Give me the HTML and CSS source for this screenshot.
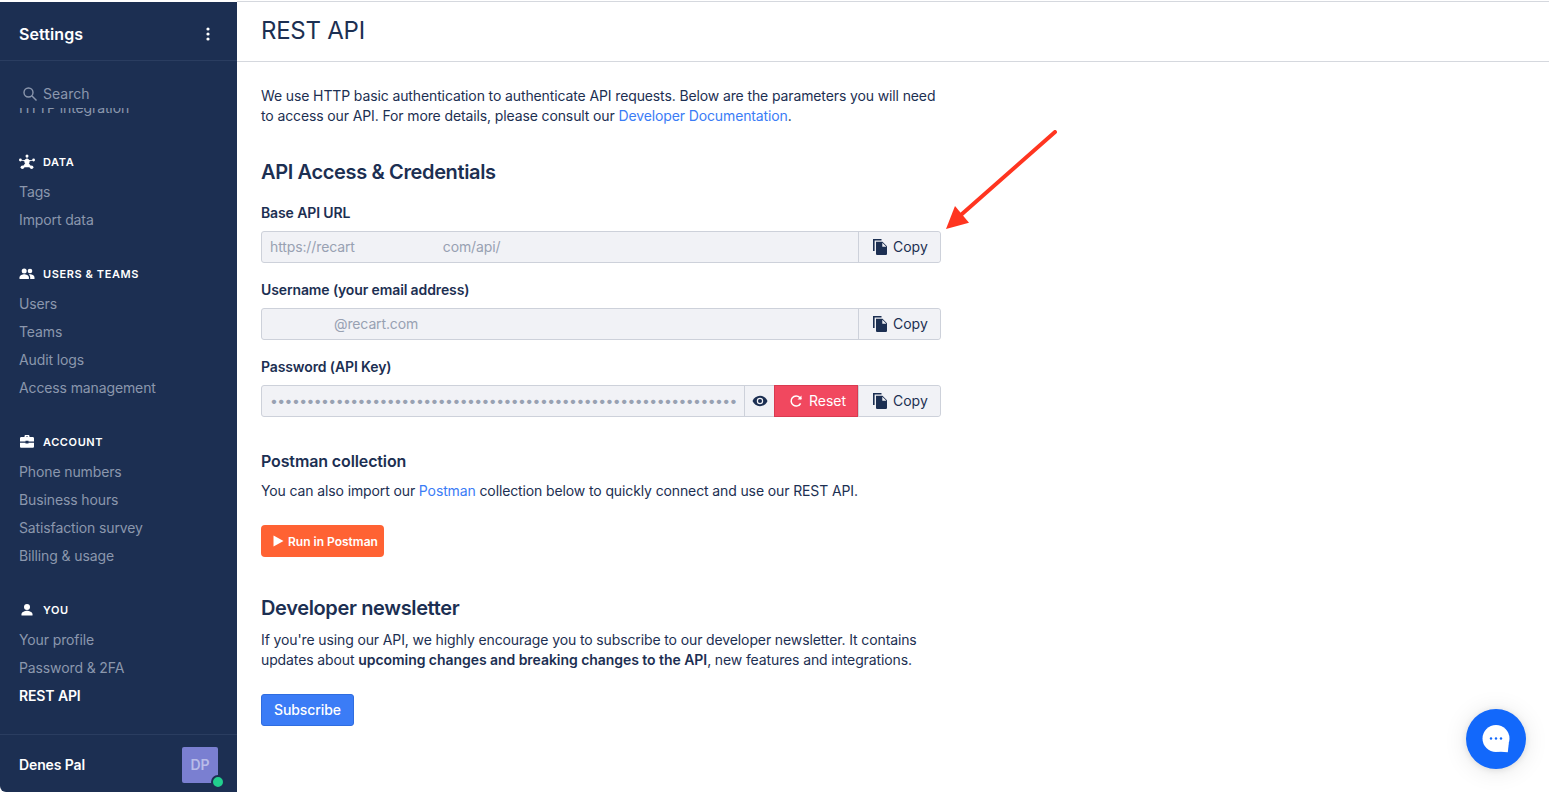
FILE: index.html
```html
<!DOCTYPE html>
<html lang="en">
  <head>
    <meta charset="UTF-8" />
    <title>REST API</title>
    <link rel="stylesheet" href="styles.css">
  </head>
  <body>
    <aside class="sidebar">
      <div class="sidebarHead">
        <span class="sidebarTitle">Settings</span>
        <svg class="dots" width="4" height="14" viewBox="0 0 4 14"><circle cx="2" cy="2" r="1.6"/><circle cx="2" cy="7" r="1.6"/><circle cx="2" cy="12" r="1.6"/></svg>
      </div>
      <div class="search">
        <svg width="16" height="16" viewBox="0 0 16 16" fill="none" stroke="#8b97ad" stroke-width="1.4"><circle cx="6.5" cy="6.5" r="4.5"/><path d="M10 10l4.5 4.5"/></svg>
        <span>Search</span>
      </div>
      <nav class="nav">
        <div class="navInner">
          <a class="navLink">HTTP integration</a>

          <div class="navGroup">
            <svg viewBox="0 0 16 16" fill="#fff"><circle cx="8" cy="7.400" r="2.600"/><circle cx="8" cy="1.900" r="1.500"/><circle cx="1.400" cy="6" r="1.400"/><circle cx="14.600" cy="6" r="1.400"/><circle cx="3.400" cy="13.200" r="1.800"/><circle cx="12.600" cy="13.200" r="1.800"/><path d="M8 2v5M1.400 6L8 7.400 14.600 6M3.400 13.200L8 7.400l4.600 5.800" stroke="#fff" stroke-width="0.600"/></svg>
            DATA
          </div>
          <a class="navLink">Tags</a>
          <a class="navLink">Import data</a>

          <div class="navGroup">
            <svg viewBox="0 0 16 16" fill="#fff"><circle cx="5.200" cy="5" r="2.500"/><circle cx="11" cy="5" r="2.300"/><path d="M0.500 13v-1.500c0-2 3-3.200 4.700-3.200s4.700 1.200 4.700 3.200V13z"/><path d="M11 8.300c1.800 0 4.500 1.100 4.500 3.200V13h-4.300v-1.800c0-1.100-.5-2-1.400-2.700.4-.1.800-.2 1.200-.2z"/></svg>
            USERS &amp; TEAMS
          </div>
          <a class="navLink">Users</a>
          <a class="navLink">Teams</a>
          <a class="navLink">Audit logs</a>
          <a class="navLink">Access management</a>

          <div class="navGroup">
            <svg viewBox="0 0 16 16" fill="#fff"><path d="M5.500 3V2.200C5.500 1.500 6 1 6.700 1h2.600c.7 0 1.200.5 1.200 1.200V3h3.200c.7 0 1.300.6 1.300 1.300V7.500H9.500V6.800h-3v.7H1V4.300C1 3.600 1.600 3 2.300 3zM7 3h2V2.400H7z"/><path d="M1 8.700h5.500v.9h3v-.9H15v3.800c0 .7-.6 1.300-1.300 1.300H2.300c-.7 0-1.300-.6-1.300-1.300z"/></svg>
            ACCOUNT
          </div>
          <a class="navLink">Phone numbers</a>
          <a class="navLink">Business hours</a>
          <a class="navLink">Satisfaction survey</a>
          <a class="navLink">Billing &amp; usage</a>

          <div class="navGroup">
            <svg viewBox="0 0 16 16" fill="#fff"><circle cx="8" cy="5" r="3"/><path d="M2.500 13.500v-1.300c0-2.200 3.600-3.400 5.500-3.400s5.500 1.200 5.500 3.400v1.300z"/></svg>
            YOU
          </div>
          <a class="navLink">Your profile</a>
          <a class="navLink">Password &amp; 2FA</a>
          <a class="navLink active">REST API</a>
        </div>
      </nav>
      <div class="sidebarFoot">
        <span class="userName">Denes Pal</span>
        <div class="avatar">DP<span class="status"></span></div>
      </div>
    </aside>

    <main class="main">
      <header class="pageHead"><h1>REST API</h1></header>
      <section class="content">
        <p class="text">We use HTTP basic authentication to authenticate API requests. Below are the parameters you will need to access our API. For more details, please consult our <a>Developer Documentation</a>.</p>

        <h2>API Access &amp; Credentials</h2>

        <label>Base API URL</label>
        <div class="field">
          <div class="fieldValue">https://recart<span class="maskUrl"></span>com/api/</div>
          <button class="copyBtn">
            <svg viewBox="0 0 16 16"><use href="#copyIcon"/></svg>
            Copy
          </button>
        </div>

        <label>Username (your email address)</label>
        <div class="field">
          <div class="fieldValue"><span class="maskMail"></span>@recart.com</div>
          <button class="copyBtn">
            <svg viewBox="0 0 16 16"><use href="#copyIcon"/></svg>
            Copy
          </button>
        </div>

        <label>Password (API Key)</label>
        <div class="field">
          <div class="fieldValue dots64">••••••••••••••••••••••••••••••••••••••••••••••••••••••••••••••••</div>
          <button class="eyeBtn">
            <svg width="16" height="16" viewBox="0 0 16 16"><path fill="#1c2f52" fill-rule="evenodd" d="M8 2.800C4.700 2.800 1.800 4.900.5 8c1.300 3.100 4.200 5.200 7.500 5.200s6.200-2.100 7.500-5.200C14.200 4.900 11.300 2.800 8 2.800zm0 8.400a3.200 3.200 0 110-6.400 3.200 3.200 0 010 6.400z"/><circle cx="8" cy="8" r="2" fill="#1c2f52"/></svg>
          </button>
          <button class="resetBtn">
            <svg width="14" height="14" viewBox="0 0 14 14" fill="none" stroke="#fff" stroke-width="1.500"><path d="M11.600 9.300A5 5 0 1 1 10.800 3.600L12.200 5"/><path d="M12.500 1.500v4h-4" fill="#fff" stroke="none"/></svg>
            Reset
          </button>
          <button class="copyBtn">
            <svg viewBox="0 0 16 16"><use href="#copyIcon"/></svg>
            Copy
          </button>
        </div>

        <h3>Postman collection</h3>
        <p class="text">You can also import our <a>Postman</a> collection below to quickly connect and use our REST API.</p>
        <button class="postmanBtn">
          <svg width="11" height="12" viewBox="0 0 11 12" fill="#fff"><path d="M0.500 0.500L10.500 6 0.500 11.500z"/></svg>
          Run in Postman
        </button>

        <h2 class="newsTitle">Developer newsletter</h2>
        <p class="text">If you're using our API, we highly encourage you to subscribe to our developer newsletter. It contains updates about <b>upcoming changes and breaking changes to the API</b>, new features and integrations.</p>
        <button class="subscribeBtn">Subscribe</button>
      </section>

      <svg class="arrow" width="116" height="104" viewBox="0 0 116 104">
        <path d="M110 2L17 84" stroke="#ff3520" stroke-width="4" stroke-linecap="round" fill="none"/>
        <path d="M1 99L10 76 24 92.700z" fill="#ff3520"/>
      </svg>

      <div class="chat">
        <svg width="28" height="28" viewBox="0 0 28 28"><circle cx="14" cy="13.500" r="13.500" fill="#fff"/><path fill="#fff" d="M15 26.500L25.800 27.200 26.800 18z"/><circle cx="9" cy="13.500" r="1.200" fill="#1268fb"/><circle cx="14" cy="13.500" r="1.200" fill="#1268fb"/><circle cx="19" cy="13.500" r="1.200" fill="#1268fb"/></svg>
      </div>
    </main>

    <svg width="0" height="0" class="defs">
      <defs>
        <g id="copyIcon" fill="#1c2f52">
          <path d="M1 0h8.500v1.500H2.600V12H1z"/>
          <path d="M4 2.800h6.500L15 7.300v7.400c0 .7-.6 1.300-1.300 1.300H5.300C4.600 16 4 15.400 4 14.700zm6.300.9v4h4.100z" fill-rule="evenodd"/>
        </g>
      </defs>
    </svg>
  </body>
</html>
```

FILE: styles.css
```css
* {
  box-sizing: border-box;
}
html,
body {
  height: 100%;
}
body {
  margin: 0;
  padding-top: 1px;
  display: flex;
  height: 792px;
  overflow: hidden;
  font-family: "Inter", sans-serif;
  font-size: 14px;
  line-height: 20px;
  letter-spacing: -0.12px;
  color: #1c2f52;
  background-color: #fff;
}
.defs {
  position: absolute;
}

/* sidebar */
.sidebar {
  width: 237px;
  flex-shrink: 0;
  display: flex;
  flex-direction: column;
  margin-top: 1px;
  background-color: #1c2f52;
  border-bottom-left-radius: 6px;
}
.sidebarHead {
  height: 59px;
  display: flex;
  align-items: center;
  justify-content: space-between;
  padding: 5px 27px 0 19px;
  border-bottom: 1px solid #2a3d60;
}
.sidebarTitle {
  font-size: 16px;
  font-weight: 600;
  letter-spacing: 0.1px;
  color: #fff;
}
.dots {
  fill: #fff;
}
.search {
  height: 47px;
  display: flex;
  align-items: center;
  gap: 5px;
  padding: 24px 0 5px 22px;
  color: #8b97ad;
  letter-spacing: 0;
  flex-shrink: 0;
}
.nav {
  flex: 1;
  overflow: hidden;
}
.navInner {
  margin-top: -14px;
}
.navLink {
  display: block;
  height: 28px;
  line-height: 28px;
  padding-left: 19px;
  color: #8b97ad;
}
.navLink.active {
  color: #fff;
  font-weight: 600;
}
.navGroup {
  display: flex;
  align-items: center;
  gap: 8px;
  height: 29px;
  margin-top: 27px;
  padding: 0 0 4px 19px;
  font-size: 11px;
  font-weight: 600;
  letter-spacing: 0.6px;
  color: #fff;
}
.navGroup svg {
  width: 16px;
  height: 16px;
}
.sidebarFoot {
  height: 58px;
  display: flex;
  align-items: center;
  justify-content: space-between;
  padding: 2px 19px 0;
  border-top: 1px solid #2a3d60;
}
.userName {
  font-weight: 600;
  color: #fff;
}
.avatar {
  position: relative;
  width: 36px;
  height: 36px;
  display: flex;
  align-items: center;
  justify-content: center;
  border-radius: 2px;
  background-color: #7a7fd1;
  color: #b9bce8;
  font-weight: 600;
}
.status {
  position: absolute;
  right: -7px;
  bottom: -6px;
  width: 14px;
  height: 14px;
  border-radius: 50%;
  background-color: #22cf8e;
  border: 2px solid #1c2f52;
}

/* main */
.main {
  position: relative;
  flex: 1;
  border-top: 1px solid #d5d8de;
}
.pageHead {
  height: 60px;
  display: flex;
  align-items: center;
  padding: 0 0 2px 24px;
  border-bottom: 1px solid #d5d8de;
}
h1 {
  margin: 0;
  font-size: 24px;
  font-weight: 400;
  letter-spacing: -0.25px;
}
.content {
  width: 728px;
  padding: 24px;
}
.text {
  margin: 0;
  letter-spacing: -0.12px;
}
.text a {
  color: #3b7cf6;
}
.text b {
  font-weight: 600;
  letter-spacing: -0.05px;
}
h2 {
  margin: 34px 0 19px;
  font-size: 20px;
  line-height: 24px;
  font-weight: 600;
  letter-spacing: -0.36px;
}
h3 {
  margin: 34px 0 10px;
  font-size: 16px;
  line-height: 20px;
  font-weight: 600;
}
label {
  display: block;
  margin-bottom: 8px;
  font-weight: 600;
  line-height: 20px;
}
.field {
  display: flex;
  height: 32px;
  margin-bottom: 17px;
  border: 1px solid #cdd1da;
  border-radius: 3px;
  background-color: #f1f2f6;
}
.fieldValue {
  flex: 1;
  padding-left: 8px;
  line-height: 30px;
  color: #98a1b2;
  white-space: nowrap;
  overflow: hidden;
}
.maskUrl {
  display: inline-block;
  width: 88px;
}
.maskMail {
  display: inline-block;
  width: 64px;
}
.dots64 {
  letter-spacing: -0.58px;
}
button {
  font-family: inherit;
  font-size: 14px;
  letter-spacing: 0;
  border: none;
  cursor: pointer;
}
.copyBtn {
  width: 82px;
  display: flex;
  align-items: center;
  gap: 5px;
  padding: 0 0 1px 13px;
  color: #1c2f52;
  background-color: #f1f2f6;
  border-left: 1px solid #cdd1da;
  border-radius: 0 3px 3px 0;
}
.copyBtn svg {
  width: 16px;
  height: 16px;
}
.eyeBtn {
  width: 30px;
  display: flex;
  align-items: center;
  justify-content: center;
  padding: 0;
  background-color: #f1f2f6;
  border-left: 1px solid #cdd1da;
}
.resetBtn {
  width: 84px;
  margin: -1px 0;
  display: flex;
  align-items: center;
  justify-content: center;
  gap: 6px;
  padding: 0 0 1px 3px;
  color: #fff;
  background-color: #f1485f;
  border: 1px solid #d93a50;
}
.postmanBtn {
  display: flex;
  align-items: center;
  gap: 4px;
  height: 32px;
  margin-top: 24px;
  padding: 0 6px 0 12px;
  font-size: 12px;
  font-weight: 600;
  color: #fff;
  background-color: #ff6233;
  border-radius: 4px;
}
.newsTitle {
  margin: 39px 0 10px;
}
.subscribeBtn {
  height: 32px;
  margin-top: 24px;
  padding: 0 12px 2px;
  color: #fff;
  font-weight: 500;
  letter-spacing: -0.1px;
  background-color: #3b7cf6;
  border: 1px solid #2f6de0;
  border-radius: 3px;
}
.arrow {
  position: absolute;
  left: 708px;
  top: 128px;
}
.chat {
  position: absolute;
  right: 23px;
  bottom: 23px;
  width: 60px;
  height: 60px;
  display: flex;
  align-items: center;
  justify-content: center;
  border-radius: 50%;
  background-color: #1268fb;
  box-shadow: 0 1px 6px rgba(0, 0, 0, 0.1), 0 2px 24px rgba(0, 0, 0, 0.1);
}
```
